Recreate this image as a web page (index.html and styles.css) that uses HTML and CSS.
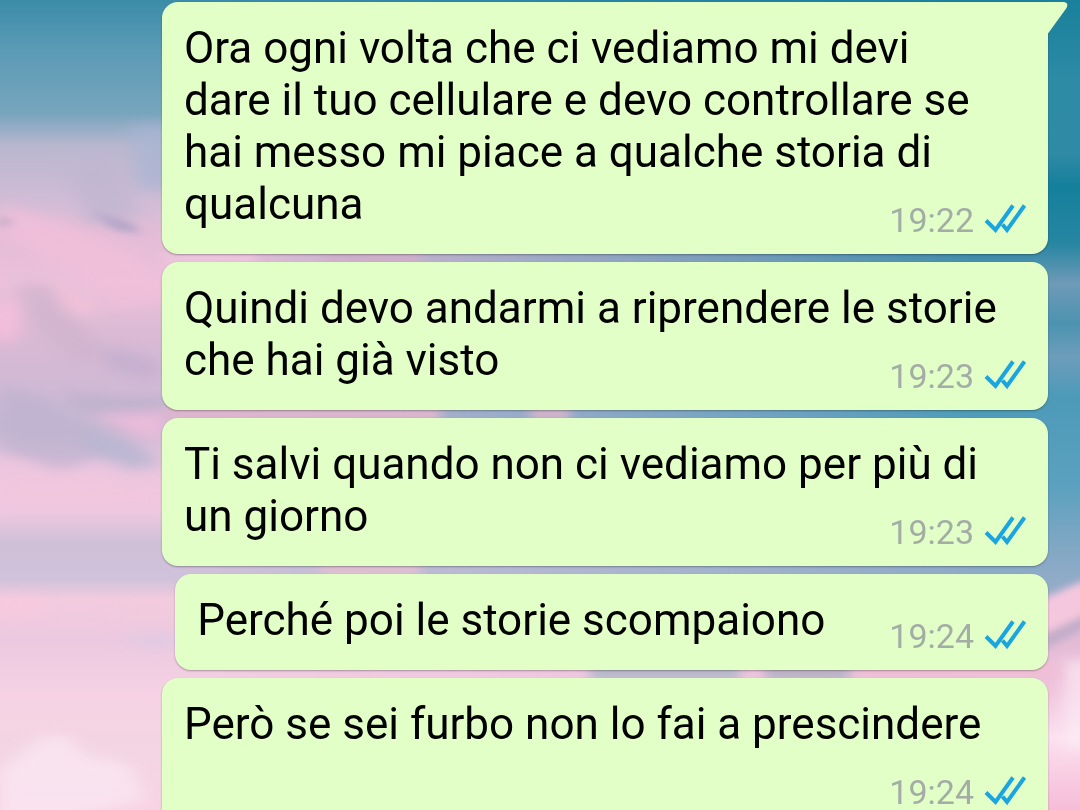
FILE: index.html
```html
<!DOCTYPE html>
<html lang="it">
  <head>
    <meta charset="UTF-8" />
    <meta name="viewport" content="width=device-width, initial-scale=1.0" />
    <title>Chat</title>
    <link rel="stylesheet" href="styles.css">
  </head>
  <body>
    <!-- wallpaper: blue sky over pink clouds -->
    <svg class="wallpaper" viewBox="0 0 1080 810" preserveAspectRatio="none" aria-hidden="true">
      <defs>
        <linearGradient id="skyLeft" x1="0" y1="0" x2="0" y2="1">
          <stop offset="0" stop-color="#3b8ca8" />
          <stop offset="0.06" stop-color="#5a9ab5" />
          <stop offset="0.14" stop-color="#78a5be" />
          <stop offset="0.18" stop-color="#b9b7cf" />
          <stop offset="0.25" stop-color="#d2bcd6" />
          <stop offset="0.29" stop-color="#e5bcd7" />
          <stop offset="0.35" stop-color="#eac0da" />
          <stop offset="0.42" stop-color="#d9b9d4" />
          <stop offset="0.48" stop-color="#d0b9d5" />
          <stop offset="0.53" stop-color="#c4b7d2" />
          <stop offset="0.57" stop-color="#ecc5de" />
          <stop offset="0.63" stop-color="#efc8e0" />
          <stop offset="0.67" stop-color="#cfc0d8" />
          <stop offset="0.715" stop-color="#cfc2da" />
          <stop offset="0.74" stop-color="#f3cbdf" />
          <stop offset="0.79" stop-color="#ecc9e0" />
          <stop offset="0.86" stop-color="#f6d2e4" />
          <stop offset="0.93" stop-color="#f3d5e3" />
          <stop offset="1" stop-color="#f8d3e4" />
        </linearGradient>
        <linearGradient id="skyRight" x1="0" y1="0" x2="0" y2="1">
          <stop offset="0" stop-color="#1a809b" />
          <stop offset="0.1" stop-color="#2d8ba6" />
          <stop offset="0.19" stop-color="#2f8aa5" />
          <stop offset="0.23" stop-color="#15809c" />
          <stop offset="0.3" stop-color="#2686a2" />
          <stop offset="0.35" stop-color="#6e9ab7" />
          <stop offset="0.4" stop-color="#4c93b0" />
          <stop offset="0.44" stop-color="#6d9dbb" />
          <stop offset="0.49" stop-color="#4c9ab8" />
          <stop offset="0.6" stop-color="#5ba1bf" />
          <stop offset="0.68" stop-color="#83a8c4" />
          <stop offset="0.74" stop-color="#9aadca" />
          <stop offset="0.77" stop-color="#e0b9d3" />
          <stop offset="0.85" stop-color="#efc2dc" />
          <stop offset="0.91" stop-color="#fbe0ee" />
          <stop offset="1" stop-color="#f6bcd8" />
        </linearGradient>
        <linearGradient id="fade" x1="0" y1="0" x2="1" y2="0">
          <stop offset="0.2" stop-color="#000" />
          <stop offset="0.9" stop-color="#fff" />
        </linearGradient>
        <mask id="fadeMask">
          <rect width="1080" height="810" fill="url(#fade)" />
        </mask>
        <filter id="soft" x="-50%" y="-50%" width="200%" height="200%">
          <feGaussianBlur stdDeviation="9 6" />
        </filter>
        <filter id="fine" x="-50%" y="-50%" width="200%" height="200%">
          <feGaussianBlur stdDeviation="6 3" />
        </filter>
      </defs>
      <rect width="1080" height="810" fill="url(#skyLeft)" />
      <rect width="1080" height="810" fill="url(#skyRight)" mask="url(#fadeMask)" />
      <g filter="url(#soft)" opacity="0.75">
        <path d="M130 125 H200 V190 H138z" fill="#a9b5d2" />
        <path d="M65 168 L110 150 L140 215 L90 225z" fill="#c0b6d0" />
        <path d="M0 205 Q60 215 120 248 T170 300 L120 310 Q60 262 0 232z" fill="#f2bfda" />
        <path d="M18 285 H50 L80 325 L105 350 L80 365 L30 322z" fill="#cfb3cd" />
        <path d="M48 278 L90 300 L105 312 L70 315z" fill="#f6c3d9" />
        <ellipse cx="5" cy="322" rx="14" ry="22" fill="#fbbfdd" />
        <path d="M100 350 Q140 345 165 370 L150 380 L108 370z" fill="#c2aecf" />
        <path d="M60 390 Q100 400 170 398 L160 412 L80 412z" fill="#bcb0ca" />
        <path d="M0 385 L40 395 L90 430 L130 450 L60 470 L0 450z" fill="#bfb3d0" />
        <path d="M78 430 L130 440 L165 465 L130 470 L85 452z" fill="#b0b4d0" />
        <path d="M92 415 L170 412 L165 442 L135 435z" fill="#f6bddc" />
        <path d="M0 475 H70 L165 490 V505 H0z" fill="#f2c6de" />
        <ellipse cx="15" cy="606" rx="32" ry="8" fill="#fbc9dd" />
        <ellipse cx="150" cy="612" rx="40" ry="8" fill="#f0cadb" />
        <ellipse cx="155" cy="641" rx="30" ry="7" fill="#ddcbe4" />
        <path d="M0 770 L40 738 L65 735 L85 755 L130 765 L145 800 L60 820 H0z" fill="#fbe8f3" />
        <path d="M1065 660 H1090 V750 H1065z" fill="#fdedf6" />
      </g>
      <g filter="url(#fine)">
        <path d="M92 212 L130 222 L142 234 L115 230z" fill="#b3a6c9" />
        <path d="M0 216 L14 222 L0 228z" fill="#c0aac4" />
        <path d="M1040 600 L1090 578 V622 L1040 640z" fill="#f5c7de" />
        <path d="M1040 636 L1090 612 V626 L1040 652z" fill="#c3adc9" />
        <path d="M165 252 H255 V264 H165z" fill="#ecc5dc" />
        <path d="M325 252 H420 V264 H325z" fill="#cfafca" />
        <path d="M165 408 H440 V420 H165z" fill="#dfb5cf" />
        <path d="M530 408 H570 V420 H530z" fill="#d3b3cb" />
        <path d="M320 564 H420 V576 H320z" fill="#e0bfd2" />
        <path d="M590 664 H740 V680 H590z" fill="#b9b9cd" />
        <path d="M765 664 H850 V680 H765z" fill="#bcb3c8" />
        <path d="M860 664 H1060 V680 H860z" fill="#efbfd6" />
      </g>
    </svg>

    <main class="chat">
      <article class="bubble">
        <svg class="tail" viewBox="0 0 22 32" aria-hidden="true">
          <path d="M0 0 H18 Q23 1 20.500 6 L2 31.500 H0z" />
        </svg>
        <span class="text">Ora ogni volta che ci vediamo mi devi dare il tuo cellulare e devo controllare se hai messo mi piace a qualche storia di qualcuna</span>
        <div class="meta">
          <time>19:22</time>
          <svg class="ticks" viewBox="0 2 42 30" role="img" aria-label="Letto">
            <path d="M2 17.500 L11.500 27 L29 2.500 M18.500 21.500 L23 27 L40.500 2.500" />
          </svg>
        </div>
      </article>

      <article class="bubble">
        <span class="text">Quindi devo andarmi a riprendere le storie che hai già visto</span>
        <div class="meta">
          <time>19:23</time>
          <svg class="ticks" viewBox="0 2 42 30" role="img" aria-label="Letto">
            <path d="M2 17.500 L11.500 27 L29 2.500 M18.500 21.500 L23 27 L40.500 2.500" />
          </svg>
        </div>
      </article>

      <article class="bubble">
        <span class="text">Ti salvi quando non ci vediamo per più di un giorno</span>
        <div class="meta">
          <time>19:23</time>
          <svg class="ticks" viewBox="0 2 42 30" role="img" aria-label="Letto">
            <path d="M2 17.500 L11.500 27 L29 2.500 M18.500 21.500 L23 27 L40.500 2.500" />
          </svg>
        </div>
      </article>

      <article class="bubble short">
        <span class="text">Perché poi le storie scompaiono</span>
        <div class="meta">
          <time>19:24</time>
          <svg class="ticks" viewBox="0 2 42 30" role="img" aria-label="Letto">
            <path d="M2 17.500 L11.500 27 L29 2.500 M18.500 21.500 L23 27 L40.500 2.500" />
          </svg>
        </div>
      </article>

      <article class="bubble">
        <span class="text">Però se sei furbo non lo fai a prescindere</span>
        <div class="meta">
          <time>19:24</time>
          <svg class="ticks" viewBox="0 2 42 30" role="img" aria-label="Letto">
            <path d="M2 17.500 L11.500 27 L29 2.500 M18.500 21.500 L23 27 L40.500 2.500" />
          </svg>
        </div>
      </article>
    </main>
  </body>
</html>
```
FILE: styles.css
```css
* {
  box-sizing: border-box;
}
body {
  margin: 0;
  height: 100vh;
  overflow: hidden;
  background: #d9b9d4;
  font-family: Roboto, sans-serif;
}
.wallpaper {
  position: fixed;
  inset: 0;
  width: 100%;
  height: 100%;
}
.chat {
  position: relative;
  display: flex;
  flex-direction: column;
  gap: 8px;
  padding: 2px 32px 0 15%;
}
.bubble {
  position: relative;
  display: flow-root;
  padding: 20px 46px 24px 22px;
  background: #e1ffc7;
  border-radius: 16px;
  box-shadow: 0 1px 2px rgba(0, 0, 0, 0.3);
  font-size: 44px;
  line-height: 52px;
}
.bubble:first-child {
  border-top-right-radius: 0;
}
.text {
  color: #000;
}
/* sits beside the last line, or drops below it when there is no room */
.meta {
  float: right;
  display: flex;
  align-items: center;
  gap: 10px;
  height: 24px;
  margin: 30px -24px -2px 0;
  color: #a3ada6;
  font-size: 34px;
}
.short {
  display: flex;
  align-self: flex-end;
  gap: 64px;
}
.ticks {
  width: 42px;
  height: 30px;
  overflow: visible;
  fill: none;
  stroke: #1ba5e0;
  stroke-width: 4;
}
.tail {
  position: absolute;
  top: 0;
  right: -20px;
  width: 22px;
  height: 32px;
  fill: #e1ffc7;
}
```
